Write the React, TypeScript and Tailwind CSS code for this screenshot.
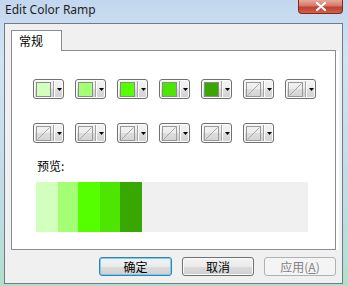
import React from 'react';

const ramp = ['bg-[#d3ffbe]', 'bg-[#a3ff73]', 'bg-[#55ff00]', 'bg-[#4ce600]', 'bg-[#38a800]'];
const rampWidths = ['w-[22px]', 'w-[20px]', 'w-[22px]', 'w-[20px]', 'w-[22px]'];

const row1: (string | null)[] = [...ramp, null, null];
const row2: (string | null)[] = [null, null, null, null, null, null];

const Arrow = () => (
  <svg width="5" height="3" viewBox="0 0 5 3" className="block">
    <polygon points="0,0 5,0 2.5,3" fill="#000" />
  </svg>
);

const SwatchButton = ({ color }: { color: string | null }) => (
  <div className="flex h-[20px] w-[31px] items-center rounded-[3px] border border-[#707070] bg-[linear-gradient(to_bottom,#f4f4f4_0%,#ececec_50%,#dedede_50%,#d2d2d2_100%)] pl-[2px] shadow-[inset_0_0_0_1px_#fcfcfc]">
    {color ? (
      <div className={`h-[15px] w-[15px] border border-[#8c8c8c] ${color}`} />
    ) : (
      <div className="relative h-[15px] w-[15px] border border-[#9a9a9a]">
        <svg width="13" height="13" viewBox="0 0 13 13" className="absolute left-0 top-0">
          <line x1="0.5" y1="12.5" x2="12.5" y2="0.5" stroke="#a8a8a8" strokeWidth="1" />
        </svg>
      </div>
    )}
    <div className="ml-[2px] h-[16px] w-[2px] border-l border-[#a4a4a4] border-r border-r-white" />
    <div className="ml-[2px]">
      <Arrow />
    </div>
  </div>
);

const DialogButton = ({
  children,
  variant,
  width,
}: {
  children: React.ReactNode;
  variant: 'default' | 'normal' | 'disabled';
  width: string;
}) => {
  const styles = {
    default:
      'border-[#3c7fb1] shadow-[inset_0_0_0_1px_#6fd0f6] bg-[linear-gradient(to_bottom,#f2f2f2_0%,#ebebeb_50%,#dddddd_50%,#cfcfcf_100%)] text-black',
    normal:
      'border-[#707070] shadow-[inset_0_0_0_1px_#fbfbfb] bg-[linear-gradient(to_bottom,#f2f2f2_0%,#ebebeb_50%,#dddddd_50%,#cfcfcf_100%)] text-black',
    disabled: 'border-[#adb2b5] bg-[#f4f4f4] text-[#838383]',
  };
  return (
    <div
      className={`flex h-[19px] items-center justify-center rounded-[3px] border text-[12px] leading-none ${width} ${styles[variant]}`}
    >
      {children}
    </div>
  );
};

export default function App() {
  return (
    <div className="h-[286px] w-[348px] overflow-hidden bg-[linear-gradient(180deg,#c2d7ee_0%,#d3e3f4_20%,#c4dcea_60%,#b6dfd6_90%,#b0e0c8_100%)] font-['Noto_Sans_CJK_SC',sans-serif]">
      <div className="flex h-[23px] items-start justify-between">
        <span className="pl-[5px] pt-[2px] font-['Noto_Sans',sans-serif] text-[12px] leading-[16px] text-[#1e1e1e]">
          Edit Color Ramp
        </span>
        <div className="mr-[5px] flex h-[14px] w-[45px] items-center justify-center rounded-b-[4px] border border-t-0 border-[#7a2a22] bg-[linear-gradient(to_bottom,#e8a99a_0%,#d2796a_45%,#c0402e_55%,#d2604a_100%)]">
          <svg width="12" height="9" viewBox="0 0 12 9">
            <path d="M2 1 L10 8 M10 1 L2 8" stroke="#ffffff" strokeWidth="2.2" strokeLinecap="round" />
          </svg>
        </div>
      </div>

      <div className="ml-[4px] flex h-[261px] w-[339px] flex-col border border-[#6f7b88] bg-[#f0f0f0]">
        <div className="pl-[6px] pt-[6px]">
          <div className="relative z-10 -mb-px flex h-[21px] w-[51px] border border-b-0 border-[#898c95] bg-white pl-[7px] pt-[2px] text-[12px] leading-[16px] text-black">
            常规
          </div>
          <div className="flex">
            <div className="flex h-[200px] w-[325px] flex-col border border-[#898c95] bg-white pl-[21px] pt-[28px]">
              <div className="flex gap-[11px]">
                {row1.map((c, i) => (
                  <SwatchButton key={i} color={c} />
                ))}
              </div>
              <div className="mt-[24px] flex gap-[11px]">
                {row2.map((c, i) => (
                  <SwatchButton key={i} color={c} />
                ))}
              </div>
              <div className="ml-[4px] mt-[15px] text-[12px] leading-[16px] text-black">预览:</div>
              <div className="ml-[3px] mt-[8px] flex h-[50px] w-[272px] bg-[#f0f0f0]">
                {ramp.map((c, i) => (
                  <div key={i} className={`h-full ${rampWidths[i]} ${c}`} />
                ))}
              </div>
            </div>
            <div className="mt-px h-[199px] w-[3px] bg-white" />
          </div>
        </div>

        <div className="mt-[7px] flex justify-end gap-[10px] pr-[6px]">
          <DialogButton variant="default" width="w-[73px]">
            确定
          </DialogButton>
          <DialogButton variant="normal" width="w-[72px]">
            取消
          </DialogButton>
          <DialogButton variant="disabled" width="w-[72px]">
            <span>
              应用(<span className="underline">A</span>)
            </span>
          </DialogButton>
        </div>
      </div>
    </div>
  );
}
